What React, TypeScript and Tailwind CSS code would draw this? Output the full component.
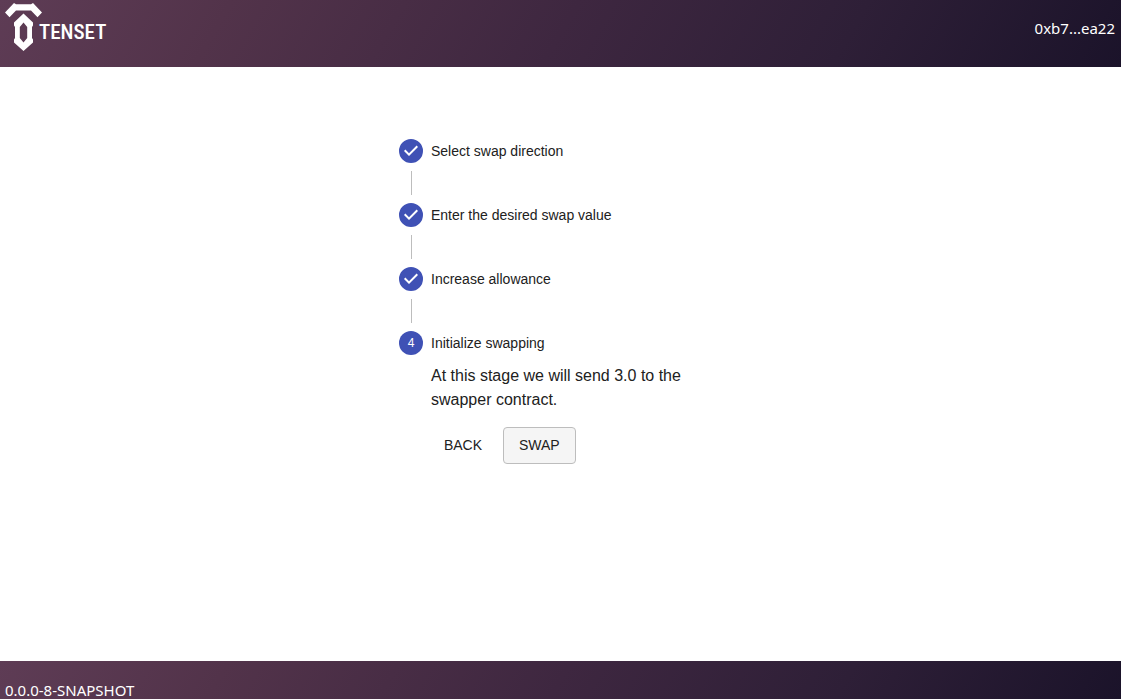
const bar =
  "bg-[linear-gradient(120deg,#5e3c55_0%,#52334a_20%,#3e2740_50%,#2e1f37_75%,#1b132a_100%)] text-white font-['Noto_Sans','Open_Sans',sans-serif] text-[15px]";

const doneSteps = ["Select swap direction", "Enter the desired swap value", "Increase allowance"];

function Logo() {
  return (
    <a href="#" aria-label="Tenset" className="flex h-[52px] items-start">
      <svg width="38" height="52" viewBox="0 0 38 52" fill="#fff" aria-hidden="true" className="shrink-0">
        <path d="M0 12.600 9 3 11 4.200H26L28 3 37 12.600 32.500 17.200 26 10.400H11L4.500 17.200Z" />
        <path
          fillRule="evenodd"
          d="M18.500 13.500 28 22.500v3l-1 1.500V38l1 1.500v3L18.500 51 9 42.500v-3l1-1.500V27l-1-1.500v-3ZM18.500 22.500 14.800 27v11l3.700 4.500 3.700-4.500V27Z"
        />
      </svg>
      <span className="-ml-1 mt-5 font-['Roboto_Condensed','Open_Sans_Condensed','Liberation_Sans_Narrow','Liberation_Sans',sans-serif] text-[21px] font-medium leading-6">
        TENSET
      </span>
    </a>
  );
}

function CheckIcon() {
  return (
    <svg width="24" height="24" viewBox="0 0 24 24" fill="#3f51b5" aria-hidden="true">
      <path d="M12 0a12 12 0 1 0 0 24 12 12 0 0 0 0-24zm-2 17l-5-5 1.400-1.400 3.600 3.600 7.600-7.600L19 8l-9 9z" />
    </svg>
  );
}

export default function App() {
  return (
    <div className="flex min-h-screen flex-col bg-white font-['Liberation_Sans',Arial,sans-serif] text-[#212121]">
      <header className={`${bar} flex h-[67px] items-start justify-between pl-[5px] pr-[6px]`}>
        <Logo />
        <span className="mt-4 leading-6">0xb7...ea22</span>
      </header>

      <main className="flex-1 pt-12">
        <div className="mx-auto max-w-[371px] p-6">
          <ol>
            {doneSteps.map((label) => (
              <li key={label}>
                <div className="flex items-center gap-2 text-sm">
                  <CheckIcon />
                  <span>{label}</span>
                </div>
                <div className="my-2 ml-3 h-6 border-l border-[#bdbdbd]" />
              </li>
            ))}
            <li>
              <div className="flex items-center gap-2 text-sm">
                <span className="flex size-6 items-center justify-center rounded-full bg-[#3f51b5] text-xs text-white">
                  4
                </span>
                <span>Initialize swapping</span>
              </div>
              <div className="pl-8 pt-[9px]">
                <p className="text-base">At this stage we will send 3.0 to the swapper contract.</p>
                <div className="mt-[15px] flex gap-2 text-sm">
                  <button type="button" className="h-9 min-w-16 rounded px-2">
                    BACK
                  </button>
                  <button
                    type="button"
                    className="h-[37px] rounded border border-[#bdbdbd] bg-[#f5f5f5] px-[15px] pb-px"
                  >
                    SWAP
                  </button>
                </div>
              </div>
            </li>
          </ol>
        </div>
      </main>

      <footer className={`${bar} h-[38px] pl-[5px] pt-5 leading-[18px]`}>0.0.0-8-SNAPSHOT</footer>
    </div>
  );
}
